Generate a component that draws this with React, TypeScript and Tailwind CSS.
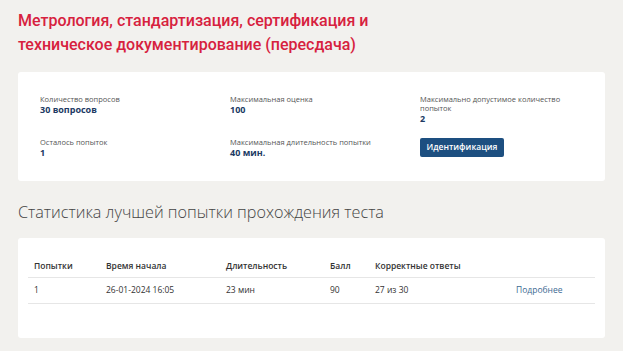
const stats = [
	{ label: "Количество вопросов", value: "30 вопросов" },
	{ label: "Максимальная оценка", value: "100" },
	{ label: "Максимально допустимое количество попыток", value: "2" },
	{ label: "Осталось попыток", value: "1" },
	{ label: "Максимальная длительность попытки", value: "40 мин." },
];

const App = () => {
	return (
		<div className="min-h-screen bg-white font-['Open_Sans',sans-serif]">
			<div className="bg-[#f2f1ee] px-[18px] pb-[13px] pt-[9px]">
				<h1 className="w-[420px] font-['Roboto',sans-serif] text-[16px] font-medium leading-[24px] text-[#d7213e]">
					Метрология, стандартизация, сертификация и техническое документирование (пересдача)
				</h1>

				<div className="mt-[15px] grid h-[109px] grid-cols-[190px_190px_1fr] content-start gap-y-[14px] rounded-[3px] bg-white pl-[22px] pt-[23px]">
					{stats.map((s) => (
						<div key={s.label} className="w-[150px] min-h-[28px]">
							<div className="text-[7.5px] leading-[9px] text-[#555]">{s.label}</div>
							<div className="text-[9px] font-bold leading-[11px] text-[#203a63]">{s.value}</div>
						</div>
					))}
					<div className="-mt-[6px]">
						<button className="h-[19px] w-[84px] rounded-[2px] bg-[#1d4f80] text-[8.5px] font-semibold text-white">
							Идентификация
						</button>
					</div>
				</div>

				<h2 className="mt-[19px] font-['Open_Sans',sans-serif] text-[16.2px] font-light leading-[24px] text-[#444]">
					Статистика лучшей попытки прохождения теста
				</h2>

				<div className="mt-[14px] h-[100px] rounded-[3px] bg-white px-[10px] pt-[19px]">
					<table className="w-full border-collapse text-left text-[8.5px] text-[#333]">
						<thead>
							<tr className="h-[20px] border-b border-[#e6e6e6]">
								<th className="w-[78px] pl-[6px] font-semibold">Попытки</th>
								<th className="w-[120px] font-semibold">Время начала</th>
								<th className="w-[104px] font-semibold">Длительность</th>
								<th className="w-[45px] font-semibold">Балл</th>
								<th className="w-[141px] font-semibold">Корректные ответы</th>
								<th></th>
							</tr>
						</thead>
						<tbody>
							<tr className="h-[26px] border-b border-[#e6e6e6]">
								<td className="pl-[6px]">1</td>
								<td>26-01-2024 16:05</td>
								<td>23 мин</td>
								<td>90</td>
								<td>27 из 30</td>
								<td className="text-[#3d6a93]">Подробнее</td>
							</tr>
						</tbody>
					</table>
				</div>
			</div>
		</div>
	);
};

export default App;
